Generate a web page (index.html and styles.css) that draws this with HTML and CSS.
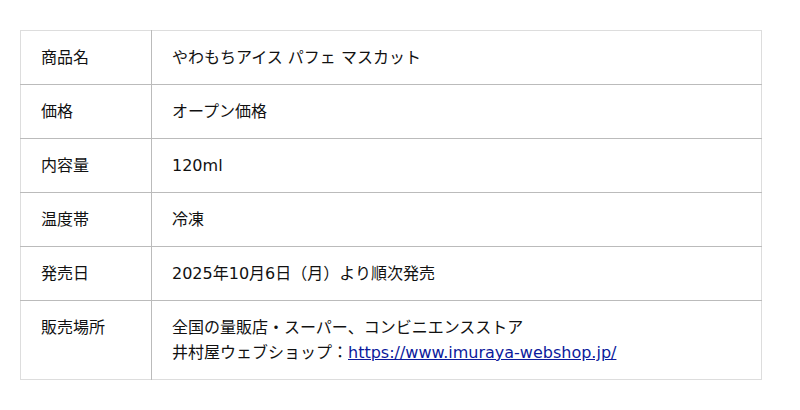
FILE: index.html
```html
<!DOCTYPE html>
<html lang="ja">
<head>
<meta charset="utf-8">
<link rel="stylesheet" href="styles.css">
</head>
<body>
<table class="spec">
  <tr><th>商品名</th><td>やわもちアイス パフェ マスカット</td></tr>
  <tr><th>価格</th><td>オープン価格</td></tr>
  <tr><th>内容量</th><td>120ml</td></tr>
  <tr><th>温度帯</th><td>冷凍</td></tr>
  <tr><th>発売日</th><td>2025年10月6日（月）より順次発売</td></tr>
  <tr><th>販売場所</th><td>全国の量販店・スーパー、コンビニエンスストア<br>井村屋ウェブショップ：<a href="#">https://www.imuraya-webshop.jp/</a></td></tr>
</table>
</body>
</html>
```
FILE: styles.css
```css
html, body { margin: 0; padding: 0; background: #fff; }
body {
  padding: 30px 38px 0 20px;
  font-family: "DejaVu Sans", "Noto Sans CJK JP", sans-serif;
  font-size: 16px;
  color: #111;
}
.spec {
  width: 742px;
  border-collapse: collapse;
  border: 1px solid #ddd;
}
.spec th, .spec td {
  text-align: left;
  vertical-align: top;
  font-weight: normal;
  line-height: 25px;
  padding: 14px 20px;
  border-top: 1px solid #bbb;
}
.spec tr:first-child th, .spec tr:first-child td { border-top: 1px solid #ddd; }
.spec th {
  width: 90px;
  border-right: 1px solid #bbb;
}
.spec a { color: #0b1a9c; }
```
